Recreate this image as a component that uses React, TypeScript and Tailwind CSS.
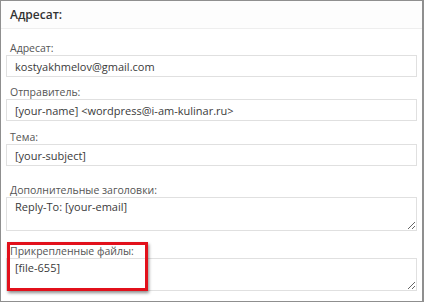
const font = { fontFamily: '"Open Sans", "Noto Sans", sans-serif' }

function Label({ children }: { children: string }) {
  return <div className="h-[14px] pl-1 text-[10.5px] leading-[14px] text-[#555]">{children}</div>
}

export default function App() {
  return (
    <div style={font} className="relative h-[302px] w-[424px] overflow-hidden bg-white">
      <div className="h-[302px] w-[424px] border-y border-l border-r-2 border-[#8f8f8f] bg-white">
        <div className="flex h-[28px] items-center border-b border-[#eeeeee] bg-[#fdfdfd] px-[9px] text-[12px] font-semibold text-[#333]">
          Адресат:
        </div>
        <div className="pl-[5px] pr-[4px]">
          <div className="mt-[12px]">
            <Label>Адресат:</Label>
            <input
              readOnly
              value="kostyakhmelov@gmail.com"
              style={font}
              className="block h-[22px] w-[411px] border border-[#e0e0e0] bg-white px-2 text-[11px] text-[#3a3a3a] outline-none"
            />
          </div>
          <div className="mt-[8px]">
            <Label>Отправитель:</Label>
            <input
              readOnly
              value="[your-name] <wordpress@i-am-kulinar.ru>"
              style={font}
              className="block h-[22px] w-[411px] border border-[#e0e0e0] bg-white px-2 text-[11px] text-[#3a3a3a] outline-none"
            />
          </div>
          <div className="mt-[9px]">
            <Label>Тема:</Label>
            <input
              readOnly
              value="[your-subject]"
              style={font}
              className="block h-[22px] w-[411px] border border-[#e0e0e0] bg-white px-2 text-[11px] text-[#3a3a3a] outline-none"
            />
          </div>
          <div className="mt-[17px]">
            <Label>Дополнительные заголовки:</Label>
            <textarea
              readOnly
              defaultValue="Reply-To: [your-email]"
              style={font}
              className="block h-[34px] w-[411px] border border-[#e0e0e0] bg-white px-2 py-0 text-[11px] leading-[18px] text-[#3a3a3a] outline-none"
            />
          </div>
          <div className="mt-[13px]">
            <Label>Прикрепленные файлы:</Label>
            <textarea
              readOnly
              defaultValue="[file-655]"
              style={font}
              className="block h-[33px] w-[411px] border border-[#e0e0e0] bg-white px-2 py-0 text-[11px] leading-[18px] text-[#3a3a3a] outline-none"
            />
          </div>
        </div>
      </div>
      <div className="absolute left-[7px] top-[242px] h-[49px] w-[141px] border-[3px] border-[#e2101b] shadow-[1px_2px_3px_rgba(0,0,0,0.45)]" />
    </div>
  )
}
